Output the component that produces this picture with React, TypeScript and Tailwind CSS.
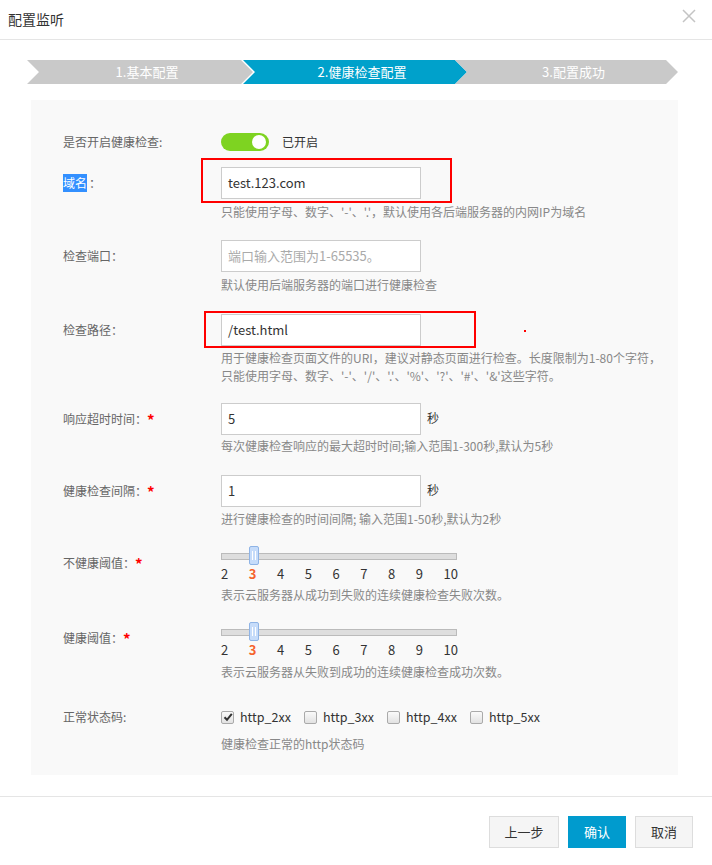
import React from "react";

const FONT = { fontFamily: '"Noto Sans CJK SC", "Microsoft YaHei", sans-serif' };

interface StepProps {
  label: string;
  active?: boolean;
  className?: string;
}

function Step({ label, active, className }: StepProps) {
  return (
    <div
      className={`flex h-[24px] items-center justify-center pl-[14px] text-[13px] text-white [clip-path:polygon(0_0,calc(100%-12px)_0,100%_50%,calc(100%-12px)_100%,0_100%,12px_50%)] ${
        active ? "bg-[#00a1cb]" : "bg-[#c9c9c9]"
      } ${className ?? ""}`}
    >
      {label}
    </div>
  );
}

function Star() {
  return <span className="text-[15px] font-bold leading-none text-[#f00]">*</span>;
}

function TextInput({ value, placeholder }: { value?: string; placeholder?: string }) {
  return (
    <div className="flex h-[32px] w-[200px] items-center border border-[#cccccc] bg-white px-[6px] text-[13px]">
      {value ? (
        <span className="text-[#333]">{value}</span>
      ) : (
        <span className="text-[#aaa]">{placeholder}</span>
      )}
    </div>
  );
}

function Help({ children, className }: { children: React.ReactNode; className?: string }) {
  return <div className={`text-[12px] leading-[18px] text-[#888] ${className ?? ""}`}>{children}</div>;
}

function Slider() {
  const nums = [2, 3, 4, 5, 6, 7, 8, 9, 10];
  return (
    <div>
      <div className="relative h-[19px] w-[236px]">
        <div className="absolute left-0 right-0 top-[7px] h-[7px] border border-[#bbb] bg-[#dedede]" />
        <div className="absolute left-[28px] top-0 flex h-[19px] w-[10px] items-center justify-center gap-[2px] rounded-[2px] border border-[#8fb4e6] bg-[#c6dcfa]">
          <span className="h-[9px] w-px bg-white" />
          <span className="h-[9px] w-px bg-white" />
        </div>
      </div>
      <div className="flex w-[237px] justify-between text-[13px] leading-[18px] text-[#333]">
        {nums.map((n) => (
          <span key={n} className={n === 3 ? "font-bold text-[#f5642d]" : ""}>
            {n}
          </span>
        ))}
      </div>
    </div>
  );
}

function Checkbox({ label, checked }: { label: string; checked?: boolean }) {
  return (
    <div className="flex w-[83px] items-center">
      <span className="flex h-[13px] w-[13px] items-center justify-center rounded-[2px] border border-[#aaa] bg-gradient-to-b from-[#fafafa] to-[#e2e2e2]">
        {checked && (
          <svg width="10" height="10" viewBox="0 0 10 10">
            <path d="M1.5 5.2 L4 7.8 L8.8 1.8" fill="none" stroke="#333" strokeWidth="2" />
          </svg>
        )}
      </span>
      <span className="ml-[6px] text-[12.5px] text-[#333]">{label}</span>
    </div>
  );
}

export default function App() {
  return (
    <div className="relative h-[865px] w-[712px] bg-white" style={FONT}>
      {/* header */}
      <div className="flex h-[40px] items-center justify-between border-b border-[#e5e5e5] pl-[8px] pr-[16px]">
        <span className="text-[14px] text-[#333]">配置监听</span>
        <svg width="14" height="14" viewBox="0 0 14 14" className="mb-[8px]">
          <path d="M1 1 L13 13 M13 1 L1 13" stroke="#c4c4c4" strokeWidth="1.5" />
        </svg>
      </div>

      {/* steps */}
      <div className="ml-[27px] mt-[20px] flex">
        <Step label="1.基本配置" className="w-[226px]" />
        <Step label="2.健康检查配置" active className="-ml-[10px] w-[224px]" />
        <Step label="3.配置成功" className="-ml-[12px] w-[223px]" />
      </div>

      {/* form panel */}
      <div className="ml-[31px] mt-[16px] w-[647px] bg-[#f9f9f9] pb-[22px] pl-[32px] pt-[33px] text-[12px] text-[#666]">
        <div className="flex items-center">
          <div className="w-[158px]">是否开启健康检查:</div>
          <div className="relative h-[18px] w-[48px] rounded-full bg-[#7ed321]">
            <span className="absolute right-[3px] top-[2px] h-[14px] w-[14px] rounded-full bg-white" />
          </div>
          <span className="ml-[13px] text-[#333]">已开启</span>
        </div>

        <div className="mt-[16px] flex">
          <div className="flex h-[32px] w-[158px] items-center">
            <span className="bg-[#3390ff] text-white">域名</span>
            <span className="ml-[2px]">：</span>
          </div>
          <div>
            <div className="relative w-[200px]">
              <TextInput value="test.123.com" />
              <div className="pointer-events-none absolute -bottom-[4px] -left-[20px] -right-[31px] -top-[9px] border-2 border-[#f00]" />
            </div>
            <Help className="mt-[4px]">只能使用字母、数字、'-'、'.'，默认使用各后端服务器的内网IP为域名</Help>
          </div>
        </div>

        <div className="mt-[19px] flex">
          <div className="flex h-[32px] w-[158px] items-center">检查端口：</div>
          <div>
            <TextInput placeholder="端口输入范围为1-65535。" />
            <Help className="mt-[4px]">默认使用后端服务器的端口进行健康检查</Help>
          </div>
        </div>

        <div className="relative mt-[20px] flex">
          <div className="flex h-[32px] w-[158px] items-center">检查路径：</div>
          <div>
            <div className="relative w-[200px]">
              <TextInput value="/test.html" />
              <div className="pointer-events-none absolute -bottom-[2px] -left-[17px] -right-[55px] -top-[3px] border-2 border-[#f00]" />
            </div>
            <Help className="mt-[3px]">
              用于健康检查页面文件的URI，建议对静态页面进行检查。长度限制为1-80个字符，
              <br />
              只能使用字母、数字、'-'、'/'、'.'、'%'、'?'、'#'、'&'这些字符。
            </Help>
          </div>
          <span className="absolute left-[461px] top-[16px] h-[2px] w-[2px] bg-[#f00]" />
        </div>

        <div className="mt-[18px] flex">
          <div className="flex h-[32px] w-[158px] items-center">
            响应超时时间：<Star />
          </div>
          <div>
            <div className="flex items-start">
              <TextInput value="5" />
              <span className="ml-[6px] mt-[6px] text-[#333]">秒</span>
            </div>
            <Help className="mt-[2px]">每次健康检查响应的最大超时时间;输入范围1-300秒,默认为5秒</Help>
          </div>
        </div>

        <div className="mt-[20px] flex">
          <div className="flex h-[32px] w-[158px] items-center">
            健康检查间隔：<Star />
          </div>
          <div>
            <div className="flex items-start">
              <TextInput value="1" />
              <span className="ml-[6px] mt-[6px] text-[#333]">秒</span>
            </div>
            <Help className="mt-[3px]">进行健康检查的时间间隔; 输入范围1-50秒,默认为2秒</Help>
          </div>
        </div>

        <div className="mt-[18px] flex items-start">
          <div className="mt-[8px] flex h-[18px] w-[158px] items-center">
            不健康阈值：<Star />
          </div>
          <div>
            <Slider />
            <Help className="mt-[3px]">表示云服务器从成功到失败的连续健康检查失败次数。</Help>
          </div>
        </div>

        <div className="mt-[18px] flex items-start">
          <div className="mt-[7px] flex h-[18px] w-[158px] items-center">
            健康阈值：<Star />
          </div>
          <div>
            <Slider />
            <Help className="mt-[4px]">表示云服务器从失败到成功的连续健康检查成功次数。</Help>
          </div>
        </div>

        <div className="mt-[27px] flex items-start">
          <div className="flex h-[18px] w-[158px] items-center">正常状态码:</div>
          <div>
            <div className="flex h-[18px] items-center">
              <Checkbox label="http_2xx" checked />
              <Checkbox label="http_3xx" />
              <Checkbox label="http_4xx" />
              <Checkbox label="http_5xx" />
            </div>
            <Help className="mt-[9px]">健康检查正常的http状态码</Help>
          </div>
        </div>
      </div>

      {/* footer */}
      <div className="mt-[21px] flex justify-end gap-[9px] border-t border-[#e5e5e5] pr-[19px] pt-[19px] text-[13px]">
        <button className="h-[32px] w-[70px] border border-[#ddd] bg-[#f5f5f5] text-[#333]">上一步</button>
        <button className="h-[32px] w-[58px] bg-[#009bce] text-white">确认</button>
        <button className="h-[32px] w-[58px] border border-[#ddd] bg-[#f5f5f5] text-[#333]">取消</button>
      </div>
    </div>
  );
}
